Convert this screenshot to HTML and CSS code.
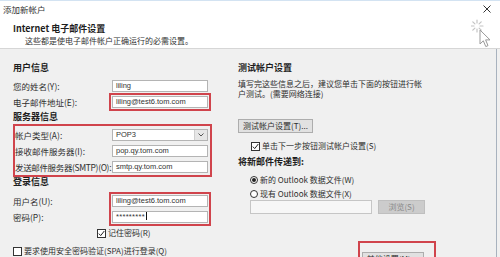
FILE: index.html
```html
<!DOCTYPE html>
<html lang="zh-CN">
<head>
    <meta charset="UTF-8">
    <title>添加新帐户</title>
    <link rel="stylesheet" href="styles.css">
</head>
<body>
    <div class="window">
        <div class="titlebar">
            <span class="title">添加新帐户</span>
            <svg class="close" width="8" height="8" viewBox="0 0 8 8"><path d="M0.5 0.5L7.5 7.5M7.5 0.5L0.5 7.5" stroke="#333" stroke-width="1"/></svg>
        </div>
        <div class="header">
            <div class="header-title">Internet 电子邮件设置</div>
            <div class="header-sub">这些都是使电子邮件帐户正确运行的必需设置。</div>
        </div>
        <svg class="cursor" width="22" height="30" viewBox="0 0 22 30">
            <g stroke="#c4c4c4" stroke-width="1.2" stroke-linecap="round">
                <path d="M6 1V4M6 10V13M0 7H3M9 7H12M1.8 2.8L3.9 4.9M8.1 9.1L10.2 11.2M10.2 2.8L8.1 4.9M3.9 9.1L1.8 11.2"/>
            </g>
            <path d="M9 11L9 25L12.3 21.8L14.8 27.6L17 26.6L14.6 20.9L19 20.9Z" fill="#fff" stroke="#9a9a9a" stroke-width="1" stroke-linejoin="round"/>
        </svg>
        <div class="content">
            <div class="col-left">
                <div class="section-title">用户信息</div>
                <div class="row first">
                    <span class="label">您的姓名(Y):</span>
                    <div class="field">liling</div>
                </div>
                <div class="row">
                    <span class="label">电子邮件地址(E):</span>
                    <div class="field marked">liling@test6.tom.com</div>
                </div>
                <div class="section-title tight">服务器信息</div>
                <div class="group">
                    <div class="row">
                        <span class="label">帐户类型(A):</span>
                        <div class="field select">POP3<span class="arrow"><svg width="6" height="4" viewBox="0 0 6 4"><path d="M0.5 0.5L3 3L5.5 0.5" fill="none" stroke="#555" stroke-width="1"/></svg></span></div>
                    </div>
                    <div class="row">
                        <span class="label">接收邮件服务器(I):</span>
                        <div class="field">pop.qy.tom.com</div>
                    </div>
                    <div class="row">
                        <span class="label long">发送邮件服务器(SMTP)(O):</span>
                        <div class="field">smtp.qy.tom.com</div>
                    </div>
                </div>
                <div class="section-title tight">登录信息</div>
                <div class="login">
                    <div class="login-labels">
                        <span class="label">用户名(U):</span>
                        <span class="label">密码(P):</span>
                    </div>
                    <div class="login-fields">
                        <div class="field">liling@test6.tom.com</div>
                        <div class="field password">*********<span class="caret"></span></div>
                    </div>
                </div>
                <div class="check-row remember">
                    <span class="checkbox checked"><svg width="7" height="7" viewBox="0 0 7 7"><path d="M0.8 3.6L2.7 5.6L6.3 1" fill="none" stroke="#222" stroke-width="1"/></svg></span>
                    <span class="check-text">记住密码(R)</span>
                </div>
                <div class="check-row spa">
                    <span class="checkbox"></span>
                    <span class="check-text">要求使用安全密码验证(SPA)进行登录(Q)</span>
                </div>
            </div>
            <div class="col-right">
                <div class="section-title">测试帐户设置</div>
                <p class="note">填写完这些信息之后，建议您单击下面的按钮进行帐<br>户测试。(需要网络连接)</p>
                <div class="button test-button">测试帐户设置(T)...</div>
                <div class="check-row next">
                    <span class="checkbox checked"><svg width="7" height="7" viewBox="0 0 7 7"><path d="M0.8 3.6L2.7 5.6L6.3 1" fill="none" stroke="#222" stroke-width="1"/></svg></span>
                    <span class="check-text">单击下一步按钮测试帐户设置(S)</span>
                </div>
                <div class="section-title deliver">将新邮件传递到:</div>
                <div class="radio-row first-radio">
                    <span class="radio selected"></span>
                    <span class="check-text">新的 Outlook 数据文件(W)</span>
                </div>
                <div class="radio-row">
                    <span class="radio"></span>
                    <span class="check-text">现有 Outlook 数据文件(X)</span>
                </div>
                <div class="browse-row">
                    <div class="field disabled"></div>
                    <div class="button disabled-button">浏览(S)</div>
                </div>
                <div class="more-box">
                    <div class="button more-button">其他设置(M) ...</div>
                </div>
            </div>
        </div>
    </div>
</body>
</html>
```

FILE: styles.css
```css
body {
    margin: 0;
    background: #f0f0f0;
    font-family: "Noto Sans CJK SC", "Noto Sans", sans-serif;
    color: #2e2e2e;
}
.window {
    position: relative;
    width: 500px;
    height: 257px;
    overflow: hidden;
}
.titlebar {
    height: 17px;
    box-sizing: border-box;
    background: #fff;
    border-top: 1px solid #d3e3f2;
    display: flex;
    align-items: center;
    justify-content: space-between;
    padding: 0 9px 0 3px;
    font-size: 8.5px;
    color: #333;
}
.header {
    height: 32px;
    box-sizing: border-box;
    background: #fff;
    border-bottom: 1px solid #d6d6d6;
    padding: 6px 0 0 13px;
}
.header-title {
    font-size: 9px;
    font-weight: bold;
    line-height: 12px;
    color: #1e1e1e;
}
.header-sub {
    font-size: 8px;
    line-height: 11px;
    padding-left: 12px;
    color: #333;
}
.cursor {
    position: absolute;
    left: 471px;
    top: 19px;
}
.content {
    display: flex;
    width: 496px;
    height: 208px;
    border-right: 1px solid #a8b2be;
}
.col-left {
    width: 212px;
    padding: 13px 0 0 13px;
}
.col-right {
    flex: 1;
    padding: 13px 0 0 13px;
}
.section-title {
    font-size: 9px;
    font-weight: bold;
    line-height: 12px;
    height: 12px;
    color: #1e1e1e;
}
.section-title.tight {
    margin-top: 1px;
}
.row {
    display: flex;
    align-items: center;
    height: 16px;
}
.row.first {
    margin-top: 4px;
}
.label {
    display: block;
    width: 99px;
    font-size: 8.5px;
    line-height: 16px;
    white-space: nowrap;
}
.label.long {
    letter-spacing: -0.35px;
}
.field {
    position: relative;
    width: 96px;
    height: 12px;
    box-sizing: border-box;
    background: #fff;
    border: 1px solid #b4b4b4;
    padding-left: 3px;
    font-family: "Liberation Sans", Arial, sans-serif;
    font-size: 7.5px;
    line-height: 10px;
    color: #333;
    white-space: nowrap;
}
.marked {
    outline: 2px solid #d0444c;
    outline-offset: 1px;
}
.group {
    margin: 3px 0 0 2px;
    padding-top: 1px;
    width: 195px;
    outline: 2px solid #d0444c;
}
.group .label {
    width: 97px;
}
.select .arrow {
    position: absolute;
    right: 0;
    top: 0;
    width: 12px;
    height: 10px;
    background: #e6e6e6;
    border-left: 1px solid #cfcfcf;
    display: flex;
    align-items: center;
    justify-content: center;
}
.login {
    display: flex;
    margin-top: 5px;
}
.login-fields {
    display: flex;
    flex-direction: column;
    gap: 4px;
    margin-top: 2px;
    outline: 2px solid #d0444c;
    outline-offset: 1px;
    align-self: flex-start;
}
.password {
    letter-spacing: 0.3px;
}
.caret {
    display: inline-block;
    width: 1px;
    height: 8px;
    background: #111;
    vertical-align: -1px;
    margin-left: 1px;
}
.check-row,
.radio-row {
    display: flex;
    align-items: center;
    height: 12px;
    gap: 2px;
}
.check-text {
    font-size: 8px;
    line-height: 12px;
    white-space: nowrap;
}
.checkbox {
    width: 9px;
    height: 9px;
    box-sizing: border-box;
    border: 1px solid #333;
    background: #fff;
    display: flex;
    align-items: center;
    justify-content: center;
}
.remember {
    margin: 2px 0 0 84px;
}
.spa {
    margin-top: 6px;
}
.note {
    margin: 5px 0 0;
    font-size: 8px;
    line-height: 10px;
    white-space: nowrap;
}
.button {
    box-sizing: border-box;
    background: #e1e1e1;
    border: 1px solid #adadad;
    font-size: 8px;
    line-height: 12px;
    text-align: center;
    white-space: nowrap;
}
.test-button {
    margin-top: 20px;
    width: 75px;
    height: 14px;
}
.next {
    margin: 7px 0 0 13px;
}
.deliver {
    margin-top: 4px;
}
.radio-row {
    margin-left: 12px;
}
.first-radio {
    margin-top: 6px;
}
.radio-row + .radio-row {
    margin-top: 2px;
}
.radio {
    width: 8px;
    height: 8px;
    box-sizing: border-box;
    border: 1px solid #333;
    border-radius: 50%;
    background: #fff;
    display: flex;
    align-items: center;
    justify-content: center;
}
.radio.selected::after {
    content: "";
    width: 4px;
    height: 4px;
    border-radius: 50%;
    background: #222;
}
.browse-row {
    display: flex;
    gap: 6px;
    margin-left: 12px;
    height: 14px;
}
.disabled {
    width: 122px;
    height: 14px;
    background: #f7f7f7;
    border-color: #c6c6c6;
}
.disabled-button {
    width: 47px;
    height: 14px;
    background: #cccccc;
    border-color: #bfbfbf;
    color: #8a8a8a;
}
.more-box {
    margin: 27px 0 0 120px;
    width: 70px;
    height: 20px;
    border: 2px solid #d0444c;
    padding: 9px 2px 0 2px;
    box-sizing: content-box;
}
.more-button {
    width: 62px;
    height: 14px;
}
```
